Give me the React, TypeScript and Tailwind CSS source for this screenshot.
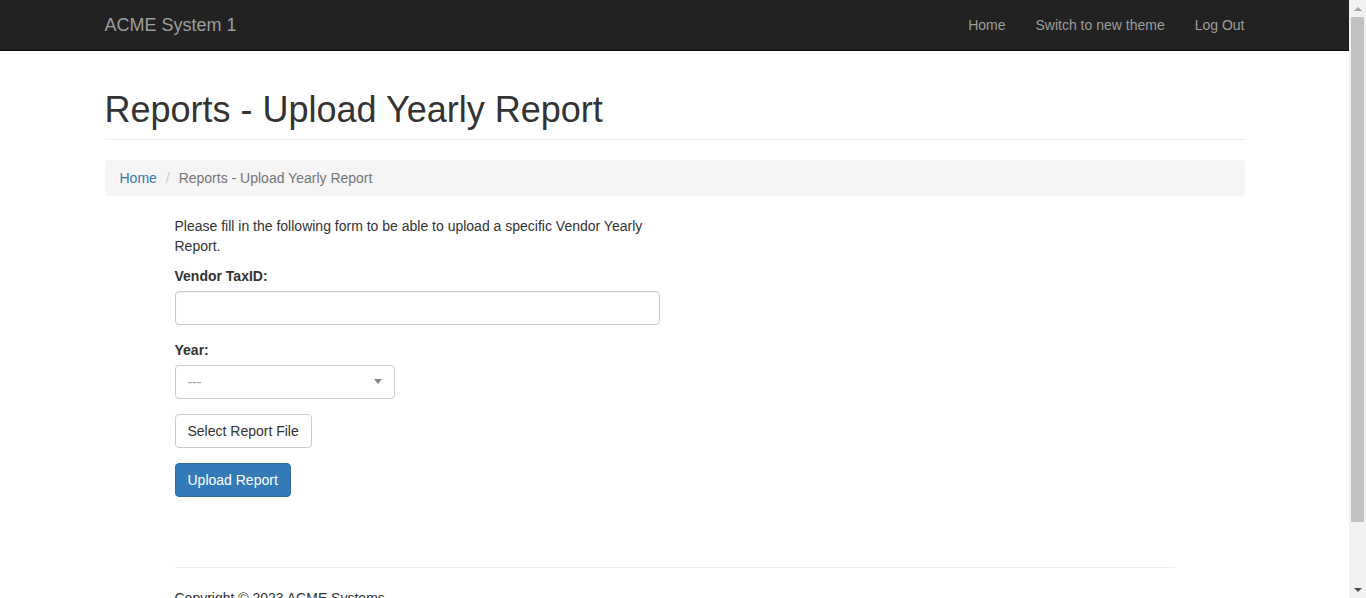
export default function App() {
  return (
    <div className="flex h-[598px] overflow-hidden bg-white font-['Liberation_Sans',Arial,sans-serif] text-[14px] leading-[20px] text-[#333]">
      <div className="min-w-0 flex-1 overflow-hidden">
        <nav className="h-[51px] border-b border-[#080808] bg-[#222]">
          <div className="mx-auto flex w-[1170px] items-center justify-between px-[15px]">
            <a className="-ml-[15px] p-[15px] text-[18px] leading-[20px] text-[#9d9d9d]">ACME System 1</a>
            <ul className="-mr-[15px] flex">
              {["Home", "Switch to new theme", "Log Out"].map((item) => (
                <li key={item}>
                  <a className="block p-[15px] text-[#9d9d9d]">{item}</a>
                </li>
              ))}
            </ul>
          </div>
        </nav>

        <div className="mx-auto w-[1170px] px-[15px]">
          <div className="mt-[39px] border-b border-[#eee] pb-[9px]">
            <h1 className="text-[36px] leading-[39.6px] font-medium">Reports - Upload Yearly Report</h1>
          </div>

          <ol className="mt-[20px] mb-[20px] flex rounded-[4px] bg-[#f5f5f5] px-[15px] py-[8px]">
            <li>
              <a className="text-[#337ab7]">Home</a>
            </li>
            <li className="ml-[4px] text-[#777]">
              <span className="px-[5px] text-[#ccc]">/{"\u00a0"}</span>
              Reports - Upload Yearly Report
            </li>
          </ol>

          <div className="ml-[70px] w-[485px]">
            <p className="mb-[10px]">
              Please fill in the following form to be able to upload a specific Vendor Yearly Report.
            </p>
            <div className="mb-[15px]">
              <label className="mb-[5px] block font-bold">Vendor TaxID:</label>
              <input
                type="text"
                className="block h-[34px] w-full rounded-[4px] border border-[#ccc] px-[12px] shadow-[inset_0_1px_1px_rgba(0,0,0,0.075)] outline-none"
              />
            </div>
            <div className="mb-[15px]">
              <label className="mb-[5px] block font-bold">Year:</label>
              <div className="flex h-[34px] w-[220px] items-center justify-between rounded-[4px] border border-[#ccc] pr-[12px] pl-[12px]">
                <span className="text-[#999]">---</span>
                <span className="h-0 w-0 border-x-[4px] border-t-[5px] border-x-transparent border-t-[#888]" />
              </div>
            </div>
            <div className="mb-[15px]">
              <button className="h-[34px] rounded-[4px] border border-[#ccc] bg-white px-[12px] text-[#333]">
                Select Report File
              </button>
            </div>
            <button className="h-[34px] rounded-[4px] border border-[#2e6da4] bg-[#337ab7] px-[12px] text-white">
              Upload Report
            </button>
          </div>

          <footer className="ml-[70px] w-[1000px]">
            <hr className="mt-[70px] mb-[20px] border-t border-[#eee]" />
            <p>Copyright © 2023 ACME Systems</p>
          </footer>
        </div>
      </div>

      <div className="flex h-[598px] w-[17px] flex-col bg-[#f1f1f1]">
        <div className="flex h-[17px] items-center justify-center">
          <span className="h-0 w-0 border-x-[4px] border-b-[4px] border-x-transparent border-b-[#a3a3a3]" />
        </div>
        <div className="flex-1">
          <div className="mx-[2px] h-[505px] bg-[#c1c1c1]" />
        </div>
        <div className="flex h-[17px] items-center justify-center">
          <span className="h-0 w-0 border-x-[4px] border-t-[4px] border-x-transparent border-t-[#505050]" />
        </div>
      </div>
    </div>
  );
}
